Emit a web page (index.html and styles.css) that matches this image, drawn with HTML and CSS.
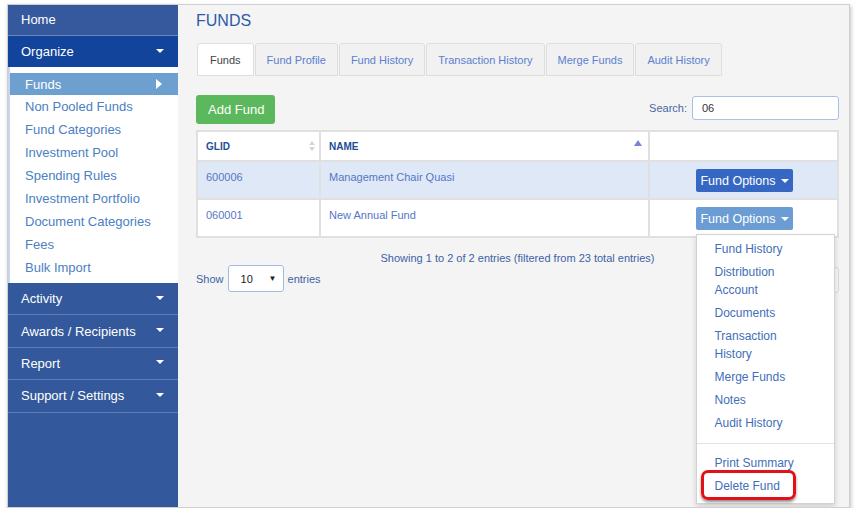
FILE: index.html
```html
<!DOCTYPE html>
<html lang="en">
<head>
	<meta charset="UTF-8">
	<title>Funds</title>
	<link rel="stylesheet" href="styles.css">
</head>
<body>
	<div class="window">
		<div class="sidebar">
			<a href="javascript:;" class="navTop home">Home</a>
			<a href="javascript:;" class="navTop open">Organize<span class="caret"></span></a>
			<ul class="subNav">
				<li class="active"><a href="javascript:;">Funds<span class="arrow"></span></a></li>
				<li><a href="javascript:;">Non Pooled Funds</a></li>
				<li><a href="javascript:;">Fund Categories</a></li>
				<li><a href="javascript:;">Investment Pool</a></li>
				<li><a href="javascript:;">Spending Rules</a></li>
				<li><a href="javascript:;">Investment Portfolio</a></li>
				<li><a href="javascript:;">Document Categories</a></li>
				<li><a href="javascript:;">Fees</a></li>
				<li><a href="javascript:;">Bulk Import</a></li>
			</ul>
			<a href="javascript:;" class="navTop">Activity<span class="caret"></span></a>
			<a href="javascript:;" class="navTop">Awards / Recipients<span class="caret"></span></a>
			<a href="javascript:;" class="navTop">Report<span class="caret"></span></a>
			<a href="javascript:;" class="navTop">Support / Settings<span class="caret"></span></a>
		</div>

		<div class="main">
			<h1 class="title">FUNDS</h1>
			<ul class="tabs">
				<li class="current"><a href="javascript:;">Funds</a></li>
				<li><a href="javascript:;">Fund Profile</a></li>
				<li><a href="javascript:;">Fund History</a></li>
				<li><a href="javascript:;">Transaction History</a></li>
				<li><a href="javascript:;">Merge Funds</a></li>
				<li><a href="javascript:;">Audit History</a></li>
			</ul>

			<div class="toolbar">
				<a href="javascript:;" class="btnAdd">Add Fund</a>
				<label class="search">Search: <span class="searchBox">06</span></label>
			</div>

			<table class="fundTable">
				<thead>
					<tr>
						<th class="colGlid">GLID<span class="sortBoth"></span></th>
						<th class="colName">NAME<span class="sortAsc"></span></th>
						<th class="colAct"></th>
					</tr>
				</thead>
				<tbody>
					<tr class="selected">
						<td><a href="javascript:;">600006</a></td>
						<td><a href="javascript:;">Management Chair Quasi</a></td>
						<td class="act">
							<div class="btnGroup">
								<a href="javascript:;" class="btnOpt">Fund Options<span class="caretSm"></span></a>
							</div>
						</td>
					</tr>
					<tr>
						<td><a href="javascript:;">060001</a></td>
						<td><a href="javascript:;">New Annual Fund</a></td>
						<td class="act">
							<div class="btnGroup">
								<a href="javascript:;" class="btnOpt pressed">Fund Options<span class="caretSm"></span></a>
								<ul class="dropMenu">
									<li><a href="javascript:;">Fund History</a></li>
									<li><a href="javascript:;">Distribution Account</a></li>
									<li><a href="javascript:;">Documents</a></li>
									<li><a href="javascript:;">Transaction History</a></li>
									<li><a href="javascript:;">Merge Funds</a></li>
									<li><a href="javascript:;">Notes</a></li>
									<li><a href="javascript:;">Audit History</a></li>
									<li class="divider"></li>
									<li><a href="javascript:;">Print Summary</a></li>
									<li class="marked"><a href="javascript:;">Delete Fund</a><span class="callout"></span></li>
								</ul>
							</div>
						</td>
					</tr>
				</tbody>
			</table>

			<div class="info">Showing 1 to 2 of 2 entries (filtered from 23 total entries)</div>
			<div class="lengthRow">
				<label class="length">Show <span class="select">10<span class="selArrow">&#9660;</span></span> entries</label>
				<div class="pager"></div>
			</div>
		</div>
	</div>
</body>
</html>
```

FILE: styles.css
```css
*{
	margin: 0;
	padding: 0;
	box-sizing: border-box;
}
body{
	background: #fff;
	font-family: "Liberation Sans", Arial, sans-serif;
}
a{
	text-decoration: none;
}
ul{
	list-style: none;
}
.window{
	display: flex;
	width: 843px;
	height: 504px;
	margin: 4px 0 0 7px;
	border: 1px solid #cfcfcf;
	box-shadow: 1px 2px 4px rgba(0,0,0,.25);
	overflow: hidden;
}

/* sidebar */
.sidebar{
	width: 170px;
	flex-shrink: 0;
	background-color: #33599c;
}
.navTop{
	display: flex;
	align-items: center;
	justify-content: space-between;
	height: 32.4px;
	padding: 0 14px 0 13px;
	color: #fff;
	font-size: 13px;
	border-bottom: 1px solid #5d7db6;
}
.navTop.home{
	height: 31px;
	padding-bottom: 2px;
	background-color: #36599d;
	border-bottom: 1px solid #6a88bd;
}
.navTop.open{
	height: 31px;
	background-color: #12449b;
	border-bottom: none;
}
.caret{
	width: 0;
	height: 0;
	border-left: 4px solid transparent;
	border-right: 4px solid transparent;
	border-top: 4px solid #fff;
	margin-bottom: 2px;
}
.subNav{
	background: #fff;
	border-left: 2px solid #c7d6ee;
	padding: 6px 0 4px;
}
.subNav li a{
	display: flex;
	align-items: center;
	justify-content: space-between;
	height: 23px;
	padding: 0 16px 0 15px;
	color: #4b80c3;
	font-size: 13px;
}
.subNav li.active a{
	height: 22px;
	background-color: #6ea0cf;
	color: #fff;
}
.arrow{
	width: 0;
	height: 0;
	border-top: 5px solid transparent;
	border-bottom: 5px solid transparent;
	border-left: 6px solid #fff;
}

/* main */
.main{
	flex: 1;
	background-color: #f4f4f4;
	padding: 6px 11px 0 18px;
}
.title{
	font-size: 16px;
	font-weight: normal;
	color: #2c5ba8;
	line-height: 20px;
}
.tabs{
	display: flex;
	gap: 1px;
	margin-top: 12px;
	padding-left: 1px;
}
.tabs li a{
	display: block;
	height: 33px;
	line-height: 32px;
	padding: 0 11px;
	font-size: 11px;
	color: #5a80cf;
	background-color: #f1f1f1;
	border: 1px solid #dedede;
	border-radius: 3px 3px 0 0;
}
.tabs li.current a{
	background-color: #fff;
	color: #444;
	padding: 0 12px;
}
.toolbar{
	display: flex;
	justify-content: space-between;
	align-items: flex-start;
	margin-top: 19px;
}
.btnAdd{
	display: block;
	height: 29px;
	line-height: 29px;
	padding: 0 11px 0 12px;
	background-color: #5cb85c;
	color: #fff;
	font-size: 13px;
	border-radius: 3px;
}
.search{
	display: flex;
	align-items: center;
	gap: 5px;
	margin-top: 1px;
	font-size: 11px;
	color: #4a66a0;
}
.searchBox{
	display: block;
	width: 147px;
	height: 24px;
	line-height: 22px;
	padding-left: 9px;
	background: #fff;
	border: 1px solid #a9c0e6;
	border-radius: 3px;
	color: #333;
	font-size: 11px;
}

/* table */
.fundTable{
	width: 643px;
	margin-top: 6px;
	border-collapse: collapse;
	font-size: 11px;
}
.fundTable th,
.fundTable td{
	border: 2px solid #e0e0e0;
	text-align: left;
	vertical-align: top;
}
.fundTable th{
	position: relative;
	height: 30px;
	padding: 8px 8px 0;
	background: #fff;
	color: #234c97;
	font-size: 10px;
	font-weight: bold;
	line-height: 13px;
}
.colGlid{
	width: 123px;
}
.colName{
	width: 329px;
}
.sortBoth{
	position: absolute;
	right: 4px;
	top: 9px;
	width: 0;
	height: 0;
	border-left: 3px solid transparent;
	border-right: 3px solid transparent;
	border-bottom: 4px solid #d4d4d4;
}
.sortBoth:after{
	content: "";
	position: absolute;
	left: -3px;
	top: 6px;
	border-left: 3px solid transparent;
	border-right: 3px solid transparent;
	border-top: 4px solid #d4d4d4;
}
.sortAsc{
	position: absolute;
	right: 6px;
	top: 8px;
	width: 0;
	height: 0;
	border-left: 4px solid transparent;
	border-right: 4px solid transparent;
	border-bottom: 6px solid #7a82d8;
}
.fundTable td{
	height: 38px;
	padding: 8px 8px 0;
	background: #fff;
	line-height: 14px;
}
.fundTable tr.selected td{
	background-color: #dfe8f6;
}
.fundTable td a{
	color: #5577c8;
}
.fundTable td.act{
	padding: 7px 0 0;
	text-align: center;
}
.btnGroup{
	position: relative;
	display: inline-block;
	text-align: left;
	margin-left: 2px;
}
.btnOpt{
	display: flex;
	align-items: center;
	gap: 5px;
	height: 23px;
	padding: 0 4px 0 4px;
	background-color: #3668c3;
	color: #fff !important;
	font-size: 12.5px;
	border-radius: 2px;
}
.btnOpt.pressed{
	background-color: #6b9cd3;
}
.caretSm{
	width: 0;
	height: 0;
	border-left: 4px solid transparent;
	border-right: 4px solid transparent;
	border-top: 4px solid #fff;
}

/* dropdown */
.dropMenu{
	position: absolute;
	top: 27px;
	left: 0;
	z-index: 5;
	width: 139px;
	padding: 3px 0 5px;
	background: #fff;
	border: 1px solid #d2d2d2;
	box-shadow: 0 3px 6px rgba(0,0,0,.15);
}
.dropMenu li a{
	display: block;
	padding: 2px 22px 3px 17px;
	line-height: 18px;
	font-size: 12px;
	color: #3f6fb8 !important;
}
.dropMenu li.divider{
	height: 1px;
	margin: 8px 0;
	background-color: #e2e2e2;
}
.dropMenu li.marked{
	position: relative;
}
.callout{
	position: absolute;
	left: 4px;
	top: -5px;
	width: 95px;
	height: 30px;
	border: 3px solid #e11019;
	border-radius: 7px;
	box-shadow: 0 2px 3px rgba(0,0,0,.45);
}

/* footer of table */
.info{
	width: 643px;
	margin-top: 13px;
	text-align: center;
	font-size: 11px;
	color: #3d62a6;
	line-height: 14px;
}
.lengthRow{
	display: flex;
	justify-content: space-between;
	align-items: flex-start;
	width: 643px;
	margin-top: 0;
}
.length{
	display: flex;
	align-items: center;
	gap: 4px;
	font-size: 11px;
	color: #3d62a6;
}
.select{
	display: flex;
	justify-content: space-between;
	align-items: center;
	width: 56px;
	height: 27px;
	padding: 0 6px 0 12px;
	background: #fff;
	border: 1px solid #a2bbe2;
	border-radius: 3px;
	color: #222;
	font-size: 11px;
}
.selArrow{
	font-size: 8px;
}
.pager{
	width: 78px;
	height: 26px;
	margin-top: 2px;
	background: #f7f7f7;
	border: 1px solid #dcdcdc;
	border-radius: 3px;
}
```
